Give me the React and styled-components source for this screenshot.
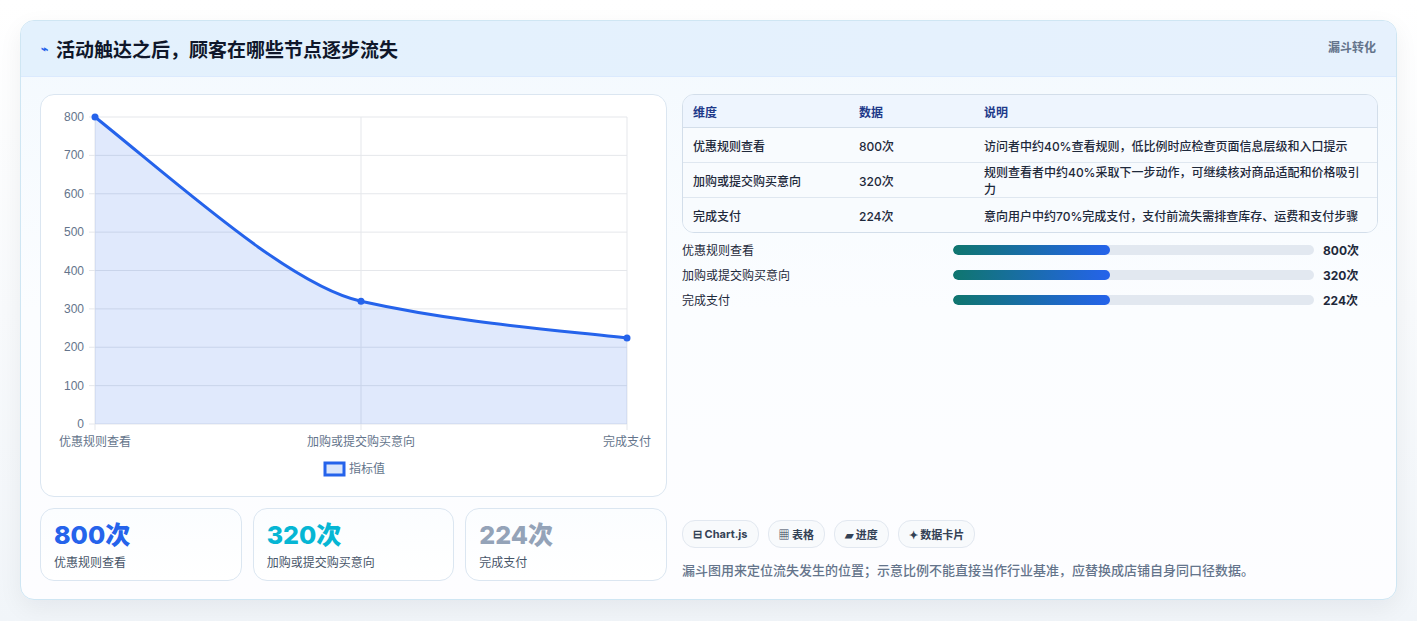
import React from 'react';
import styled, { createGlobalStyle } from 'styled-components';

const Global = createGlobalStyle`
  body { margin: 0; background: #f8fafc; font-family: Inter, "Noto Sans CJK SC", sans-serif; }
`;

const Page = styled.div`
  padding: 20px 20px 22px 20px;
  background: linear-gradient(180deg, #ffffff, #f1f5f9);
`;

const Card = styled.section`
  border: 1px solid #cfe6f3;
  border-radius: 14px;
  background: linear-gradient(180deg, #f3f9fe 0%, #fbfdff 50%, #fdfdff 100%);
  box-shadow: 0 8px 24px rgba(15, 23, 42, 0.06);
  overflow: hidden;
`;

const Header = styled.header`
  height: 55px;
  display: flex;
  align-items: center;
  justify-content: space-between;
  padding: 0 20px;
  background: linear-gradient(90deg, #e3f1fd, #e6f1fd);
  border-bottom: 1px solid #dbeafe;
`;

const Title = styled.h1`
  margin: 0;
  font-size: 19px;
  font-weight: 700;
  color: #0f172a;
  display: flex;
  align-items: center;
  gap: 8px;
`;

const Tag = styled.span`
  font-size: 12px;
  font-weight: 700;
  color: #64748b;
  align-self: flex-start;
  margin-top: 17px;
`;

const Body = styled.div`
  display: grid;
  grid-template-columns: 627px 1fr;
  gap: 15px;
  padding: 17px 18px 18px 19px;
`;

const Col = styled.div`
  display: flex;
  flex-direction: column;
  gap: 11px;
`;

const ChartBox = styled.div`
  height: 403px;
  border: 1px solid #dbe6f1;
  border-radius: 14px;
  background: #fff;
  box-sizing: border-box;
`;

const Stats = styled.div`
  display: grid;
  grid-template-columns: repeat(3, 1fr);
  gap: 11px;
`;

const Stat = styled.div`
  height: 73px;
  box-sizing: border-box;
  border: 1px solid #dbe6f1;
  border-radius: 14px;
  background: linear-gradient(180deg, #fbfdff, #ffffff);
  padding: 10px 13px;
`;

const StatValue = styled.div`
  font-size: 25px;
  font-weight: 800;
  line-height: 32px;
  color: ${p => p.color};
`;

const StatLabel = styled.div`
  font-size: 12px;
  color: #475569;
  margin-top: 2px;
`;

const Table = styled.table`
  width: 100%;
  border-collapse: separate;
  border-spacing: 0;
  border: 1px solid #d3deea;
  border-radius: 12px;
  overflow: hidden;
  font-size: 12px;
  color: #1e293b;
  th {
    text-align: left;
    font-weight: 700;
    color: #1e3a8a;
    background: #eef5fe;
    height: 32px;
    padding: 0 10px;
    border-bottom: 1px solid #d3deea;
  }
  td {
    height: 34px;
    padding: 0 10px;
    background: #f8fbfe;
    font-weight: 500;
  }
  tr:not(:last-child) td { border-bottom: 1px solid #dfe7f0; }
`;

const Bars = styled.div`
  display: flex;
  flex-direction: column;
  gap: 8px;
  margin-top: 8px;
`;

const BarRow = styled.div`
  display: grid;
  grid-template-columns: 262px 361px 1fr;
  gap: 9px;
  align-items: center;
  font-size: 12px;
  color: #1e293b;
  height: 17px;
`;

const Track = styled.div`
  height: 10px;
  border-radius: 5px;
  background: #e2e8f0;
  overflow: hidden;
`;

const Fill = styled.div`
  height: 100%;
  border-radius: 5px;
  background: linear-gradient(90deg, #0f766e, #2563eb);
`;

const BarValue = styled.span`
  font-weight: 700;
`;

const Chips = styled.div`
  display: flex;
  gap: 9px;
  margin-top: auto;
`;

const Chip = styled.span`
  height: 26px;
  padding: 0 10px;
  display: inline-flex;
  align-items: center;
  gap: 4px;
  border: 1px solid #e2e8f0;
  border-radius: 13px;
  background: #f8fafc;
  font-size: 11px;
  font-weight: 700;
  color: #334155;
`;

const Note = styled.p`
  margin: 12px 0 2px;
  font-size: 13px;
  font-weight: 500;
  color: #64748b;
`;

const rows = [
  ['优惠规则查看', '800次', '访问者中约40%查看规则，低比例时应检查页面信息层级和入口提示'],
  ['加购或提交购买意向', '320次', '规则查看者中约40%采取下一步动作，可继续核对商品适配和价格吸引力'],
  ['完成支付', '224次', '意向用户中约70%完成支付，支付前流失需排查库存、运费和支付步骤'],
];

const Chart = () => {
  const x0 = 54, x1 = 586, y0 = 22, y1 = 329;
  const yOf = v => y1 - (v / 800) * (y1 - y0);
  const xs = [x0, (x0 + x1) / 2, x1];
  const pts = [800, 320, 224].map((v, i) => [xs[i], yOf(v)]);
  const line = `M${pts[0][0]},${pts[0][1]} C140,${yOf(620)} 250,${yOf(360)} ${pts[1][0]},${pts[1][1]} C420,${yOf(262)} 520,${yOf(244)} ${pts[2][0]},${pts[2][1]}`;
  const lbl = { fontFamily: '"Liberation Sans", "Noto Sans CJK SC", sans-serif', fontSize: 12, fill: '#64748b' };
  return (
    <svg width="625" height="401" viewBox="0 0 625 401">
      {[0, 100, 200, 300, 400, 500, 600, 700, 800].map(v => (
        <g key={v}>
          <line x1={x0 - 6} x2={x1} y1={yOf(v)} y2={yOf(v)} stroke="#e5e7eb" />
          <text x={x0 - 11} y={yOf(v) + 4} textAnchor="end" style={lbl}>{v}</text>
        </g>
      ))}
      {xs.map(x => <line key={x} x1={x} x2={x} y1={y0} y2={y1 + 6} stroke="#e5e7eb" />)}
      <path d={`${line} L${x1},${y1} L${x0},${y1} Z`} fill="rgba(37,99,235,0.14)" />
      <path d={line} fill="none" stroke="#2563eb" strokeWidth="3" />
      {pts.map(([x, y]) => <circle key={x} cx={x} cy={y} r="3.5" fill="#2563eb" />)}
      <text x={x0} y={351} textAnchor="middle" style={lbl}>优惠规则查看</text>
      <text x={xs[1]} y={351} textAnchor="middle" style={lbl}>加购或提交购买意向</text>
      <text x={x1} y={351} textAnchor="middle" style={lbl}>完成支付</text>
      <rect x={284} y={368} width={19} height={12} fill="#dbe6fb" stroke="#2563eb" strokeWidth="3" />
      <text x={308} y={378} style={lbl}>指标值</text>
    </svg>
  );
};

export default function App() {
  return (
    <Page>
      <Global />
      <Card>
        <Header>
          <Title><span style={{ color: '#2563eb', fontSize: 12 }}>⌁</span>活动触达之后，顾客在哪些节点逐步流失</Title>
          <Tag>漏斗转化</Tag>
        </Header>
        <Body>
          <Col>
            <ChartBox><Chart /></ChartBox>
            <Stats>
              <Stat><StatValue color="#2563eb">800次</StatValue><StatLabel>优惠规则查看</StatLabel></Stat>
              <Stat><StatValue color="#06b6d4">320次</StatValue><StatLabel>加购或提交购买意向</StatLabel></Stat>
              <Stat><StatValue color="#94a3b8">224次</StatValue><StatLabel>完成支付</StatLabel></Stat>
            </Stats>
          </Col>
          <Col style={{ gap: 0 }}>
            <Table>
              <thead><tr><th style={{ width: 146 }}>维度</th><th style={{ width: 105 }}>数据</th><th>说明</th></tr></thead>
              <tbody>
                {rows.map(r => <tr key={r[0]}>{r.map(c => <td key={c}>{c}</td>)}</tr>)}
              </tbody>
            </Table>
            <Bars>
              {rows.map(r => (
                <BarRow key={r[0]}>
                  <span>{r[0]}</span>
                  <Track><Fill style={{ width: '43.5%' }} /></Track>
                  <BarValue>{r[1]}</BarValue>
                </BarRow>
              ))}
            </Bars>
            <Chips>
              <Chip>⊟ Chart.js</Chip>
              <Chip>▦ 表格</Chip>
              <Chip>▰ 进度</Chip>
              <Chip>✦ 数据卡片</Chip>
            </Chips>
            <Note>漏斗图用来定位流失发生的位置；示意比例不能直接当作行业基准，应替换成店铺自身同口径数据。</Note>
          </Col>
        </Body>
      </Card>
    </Page>
  );
}
